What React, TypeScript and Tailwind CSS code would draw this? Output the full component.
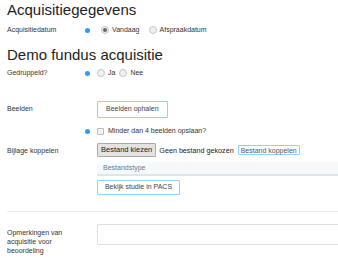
import React from "react";

function Dot() {
  return <span className="inline-block w-[5px] h-[5px] rounded-full bg-[#2a9df4]" />;
}

function Radio({ checked }: { checked?: boolean }) {
  return (
    <span className="inline-flex items-center justify-center w-[8px] h-[8px] rounded-full border border-[#c8c8c8] bg-[#f0f0f0]">
      {checked && <span className="w-[4px] h-[4px] rounded-full bg-[#666]" />}
    </span>
  );
}

function Row({ label, dot, children, className = "", labelClass = "" }: { label?: React.ReactNode; dot?: boolean; children?: React.ReactNode; className?: string; labelClass?: string }) {
  return (
    <div className={"flex items-center " + className}>
      <div className={"w-[78px] shrink-0 text-[#333] " + labelClass}>{label}</div>
      <div className="w-[12px] shrink-0 flex items-center">{dot && <Dot />}</div>
      <div className="flex-1 flex items-center min-w-0">{children}</div>
    </div>
  );
}

export default function App() {
  return (
    <div className="w-[338px] h-[258px] overflow-hidden bg-white pl-[7px] text-[7px] text-[#333]" style={{ fontFamily: '"Liberation Sans", Arial, sans-serif' }}>
      <h1 className="text-[15px] leading-[18px] pt-[1px] text-[#222]">Acquisitiegegevens</h1>
      <Row label="Acquisitiedatum" dot className="mt-[6px] h-[10px]">
        <span className="ml-[4px] flex items-center gap-[3px]"><Radio checked /> Vandaag</span>
        <span className="ml-[9px] flex items-center gap-[3px]"><Radio /> Afspraakdatum</span>
      </Row>

      <h1 className="text-[15px] leading-[18px] mt-[11px] text-[#222]">Demo fundus acquisitie</h1>
      <Row label="Gedruppeld?" dot className="mt-[4px] h-[10px]">
        <span className="flex items-center gap-[3px]"><Radio /> Ja</span>
        <span className="ml-[4px] flex items-center gap-[3px]"><Radio /> Nee</span>
      </Row>

      <Row label="Beelden" className="mt-[23px]">
        <button className="h-[17px] px-[8px] border border-[#8fd3f7] bg-white text-[#444] rounded-[1px]">Beelden ophalen</button>
      </Row>

      <Row dot className="mt-[8px] h-[10px]">
        <span className="inline-block w-[7px] h-[7px] border border-[#bbb] bg-[#f3f3f3] rounded-[1px]" />
        <span className="ml-[4px]">Minder dan 4 beelden opslaan?</span>
      </Row>

      <Row label="Bijlage koppelen" className="mt-[7px] !items-start" labelClass="mt-[3px]">
        <button className="h-[14px] px-[3px] border border-[#aaa] bg-[#e3e3e3] text-[#222] text-[7.5px] rounded-[1px]">Bestand kiezen</button>
        <span className="ml-[3px] text-[#222] text-[7.2px] mt-[3px]">Geen bestand gekozen</span>
        <button className="ml-[4px] h-[10px] px-[2px] border border-[#8fd3f7] bg-white text-[#555] rounded-[1px] leading-none">Bestand koppelen</button>
      </Row>

      <Row className="mt-[5px]">
        <div className="w-full h-[14px] flex items-center px-[6px] bg-[#f6f9fc] border-b-[2px] border-[#e2e5e8] text-[#6a7a8c]">Bestandstype</div>
      </Row>

      <Row className="mt-[4px]">
        <button className="h-[15px] w-[83px] border border-[#8fd3f7] bg-white text-[#444] rounded-[1px]">Bekijk studie in PACS</button>
      </Row>

      <div className="mt-[16px] border-t border-[#eee]" />

      <div className="flex mt-[12px]">
        <div className="w-[90px] shrink-0 pr-[20px] leading-[9px] pt-[4px] text-[#333]">Opmerkingen van acquisitie voor beoordeling</div>
        <div className="flex-1 h-[21px] border border-[#e0e0e0] border-r-0 rounded-l-[2px]" />
      </div>
    </div>
  );
}
